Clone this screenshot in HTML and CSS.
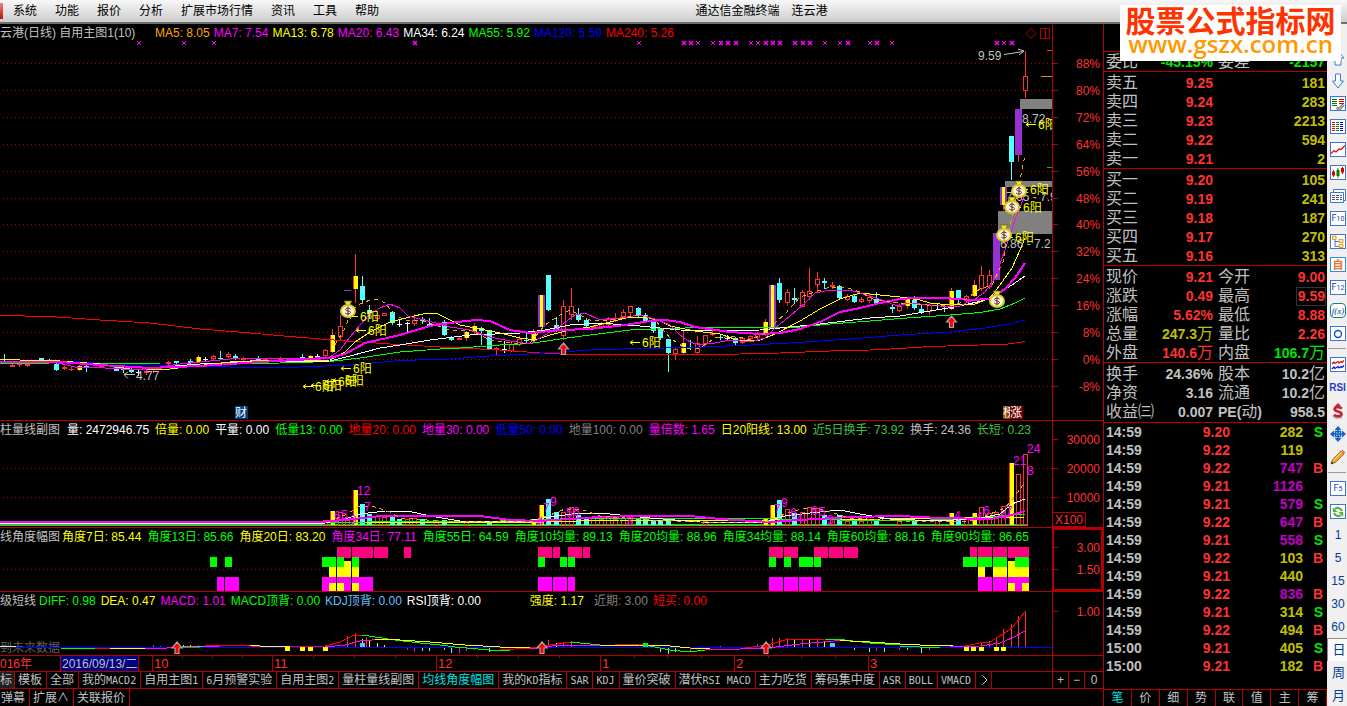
FILE: index.html
```html
<!DOCTYPE html>
<html lang="zh-CN">
<head>
<meta charset="utf-8">
<title>通达信金融终端 连云港</title>
<link rel="stylesheet" href="styles.css">
</head>
<body>
<header class="menubar">
  <span class="app-mark"></span>
  <nav class="menu">
    <button>系统</button><button>功能</button><button>报价</button><button>分析</button><button>扩展市场行情</button><button>资讯</button><button>工具</button><button>帮助</button>
  </nav>
  <h1 class="title">通达信金融终端&emsp;连云港</h1>
</header>

<div class="workspace">
  <main class="charts">
    <section class="pane pane-main">
      <svg id="main" viewBox="0 24 1103 396" preserveAspectRatio="xMaxYMax slice"></svg>
      <div class="legend">
        <span class="name wide">云港(日线) 自用主图1(10)</span>
        <span class="c-orange">MA5: 8.05</span><span class="c-magenta">MA7: 7.54</span><span class="c-yellow">MA13: 6.78</span><span class="c-magenta">MA20: 6.43</span><span class="c-white">MA34: 6.24</span><span class="c-lime">MA55: 5.92</span><span class="c-blue">MA120: 5.59</span><span class="c-red">MA240: 5.26</span>
      </div>
    </section>
    <section class="pane pane-volume">
      <svg id="volume" viewBox="0 421 1103 106" preserveAspectRatio="xMaxYMax slice"></svg>
      <div class="legend loose">
        <span class="name">柱量线副图</span>
        <span class="c-white">量: 2472946.75</span><span class="c-yellow">倍量: 0.00</span><span class="c-white">平量: 0.00</span><span class="c-lime">低量13: 0.00</span><span class="c-red">地量20: 0.00</span><span class="c-magenta">地量30: 0.00</span><span class="c-blue">低量50: 0.00</span><span class="c-gray">地量100: 0.00</span><span class="c-magenta">量倍数: 1.65</span><span class="c-yellow">日20阳线: 13.00</span><span class="c-green">近5日换手: 73.92</span><span class="c-silver">换手: 24.36</span><span class="c-green">长短: 0.23</span>
      </div>
    </section>
    <section class="pane pane-angle">
      <svg id="angle" viewBox="0 528 1103 63" preserveAspectRatio="xMaxYMax slice"></svg>
      <div class="legend loose">
        <span class="name narrow">线角度幅图</span>
        <span class="c-yellow">角度7日: 85.44</span><span class="c-lime">角度13日: 85.66</span><span class="c-yellow">角度20日: 83.20</span><span class="c-magenta">角度34日: 77.11</span><span class="c-lime">角度55日: 64.59</span><span class="c-lime">角度10均量: 89.13</span><span class="c-lime">角度20均量: 88.96</span><span class="c-lime">角度34均量: 88.14</span><span class="c-lime">角度60均量: 88.16</span><span class="c-lime">角度90均量: 86.65</span>
      </div>
    </section>
    <section class="pane pane-macd">
      <svg id="macd" viewBox="0 592 1103 63" preserveAspectRatio="xMaxYMax slice"></svg>
      <div class="legend medium">
        <span class="name short">级短线</span>
        <span class="c-lime">DIFF: 0.98</span><span class="c-yellow">DEA: 0.47</span><span class="c-magenta">MACD: 1.01</span><span class="c-lime">MACD顶背: 0.00</span><span class="c-sky">KDJ顶背: 0.00</span><span class="c-white">RSI顶背: 0.00</span>
        <span class="c-yellow apart">强度: 1.17</span><span class="c-gray near">近期: 3.00</span><span class="c-red">短买: 0.00</span>
      </div>
    </section>
    <section class="pane pane-time">
      <svg id="time" viewBox="0 656 1103 15" preserveAspectRatio="xMaxYMax slice"></svg>
    </section>
    <nav class="tabs">
      <button class="chosen">标</button><button>模板</button><button>全部</button><button>我的<i>MACD2</i></button><button>自用主图<i>1</i></button><button><i>6</i>月预警实验</button><button>自用主图<i>2</i></button><button>量柱量线副图</button><button class="active">均线角度幅图</button><button>我的<i>KD</i>指标</button><button><i>SAR</i></button><button><i>KDJ</i></button><button>量价突破</button><button>潜伏<i>RSI MACD</i></button><button>主力吃货</button><button>筹码集中度</button><button><i>ASR</i></button><button><i>BOLL</i></button><button><i>VMACD</i></button><button class="more" aria-label="更多"><svg width="6" height="10" viewBox="0 0 6 10"><path d="M.5.5 5 5 .5 9.500" fill="none" stroke="#c0c0c0"/></svg></button>
      <span class="zoomers"><button>+</button><button>−</button><button>0</button></span>
    </nav>
    <nav class="tabs lower">
      <button class="first">弹幕</button><button>扩展∧</button><button>关联报价</button>
    </nav>
  </main>

  <aside class="quote">
    <div class="quote-title"></div>
    <table class="book">
      <colgroup><col class="k1"><col class="v1"><col class="k2"><col></colgroup>
      <tbody class="single"><tr><th>委比</th><td class="dn">-45.15%</td><th>委差</th><td class="dn">-2157</td></tr></tbody>
      <tbody>
        <tr><th>卖五</th><td class="up">9.25</td><td colspan="2" class="qty">181</td></tr>
        <tr><th>卖四</th><td class="up">9.24</td><td colspan="2" class="qty">283</td></tr>
        <tr><th>卖三</th><td class="up">9.23</td><td colspan="2" class="qty">2213</td></tr>
        <tr><th>卖二</th><td class="up">9.22</td><td colspan="2" class="qty">594</td></tr>
        <tr><th>卖一</th><td class="up">9.21</td><td colspan="2" class="qty">2</td></tr>
      </tbody>
      <tbody>
        <tr><th>买一</th><td class="up">9.20</td><td colspan="2" class="qty">105</td></tr>
        <tr><th>买二</th><td class="up">9.19</td><td colspan="2" class="qty">241</td></tr>
        <tr><th>买三</th><td class="up">9.18</td><td colspan="2" class="qty">187</td></tr>
        <tr><th>买四</th><td class="up">9.17</td><td colspan="2" class="qty">270</td></tr>
        <tr><th>买五</th><td class="up">9.16</td><td colspan="2" class="qty">313</td></tr>
      </tbody>
      <tbody>
        <tr><th>现价</th><td class="up">9.21</td><th>今开</th><td class="up">9.00</td></tr>
        <tr><th>涨跌</th><td class="up">0.49</td><th>最高</th><td class="up"><span class="boxed">9.59</span></td></tr>
        <tr><th>涨幅</th><td class="up">5.62%</td><th>最低</th><td class="up">8.88</td></tr>
        <tr><th>总量</th><td class="qty">247.3<b>万</b></td><th>量比</th><td class="up">2.26</td></tr>
        <tr><th>外盘</th><td class="up">140.6<b>万</b></td><th>内盘</th><td class="dn">106.7<b>万</b></td></tr>
      </tbody>
      <tbody>
        <tr><th>换手</th><td>24.36%</td><th>股本</th><td>10.2<b>亿</b></td></tr>
        <tr><th>净资</th><td>3.16</td><th>流通</th><td>10.2<b>亿</b></td></tr>
        <tr><th>收益㈢</th><td>0.007</td><th><em>PE(</em>动<em>)</em></th><td>958.5</td></tr>
      </tbody>
    </table>
    <table class="ticks">
      <colgroup><col class="t"><col class="p"><col class="q"><col></colgroup>
      <tbody>
        <tr><td>14:59</td><td>9.20</td><td>282</td><td class="dn">S</td></tr>
        <tr><td>14:59</td><td>9.22</td><td>119</td><td></td></tr>
        <tr><td>14:59</td><td>9.22</td><td class="big">747</td><td class="up">B</td></tr>
        <tr><td>14:59</td><td>9.21</td><td class="big">1126</td><td></td></tr>
        <tr><td>14:59</td><td>9.21</td><td class="big">579</td><td class="dn">S</td></tr>
        <tr><td>14:59</td><td>9.22</td><td class="big">647</td><td class="up">B</td></tr>
        <tr><td>14:59</td><td>9.21</td><td class="big">558</td><td class="dn">S</td></tr>
        <tr><td>14:59</td><td>9.22</td><td>103</td><td class="up">B</td></tr>
        <tr><td>14:59</td><td>9.21</td><td>440</td><td></td></tr>
        <tr><td>14:59</td><td>9.22</td><td class="big">836</td><td class="up">B</td></tr>
        <tr><td>14:59</td><td>9.21</td><td>314</td><td class="dn">S</td></tr>
        <tr><td>14:59</td><td>9.22</td><td>494</td><td class="up">B</td></tr>
        <tr><td>15:00</td><td>9.21</td><td>405</td><td class="dn">S</td></tr>
        <tr><td>15:00</td><td>9.21</td><td>182</td><td class="up">B</td></tr>
      </tbody>
    </table>
    <nav class="quote-tabs">
      <button class="active">笔</button><button>价</button><button>细</button><button>势</button><button>联</button><button>值</button><button>主</button><button>筹</button>
    </nav>
  </aside>

  <nav class="tools">
    <button aria-label="上一只"><svg viewBox="0 0 16 16"><path d="M8 1 14 8H11V15H5V8H2Z" fill="#fff" stroke="#3c78dc"/></svg></button>
    <button aria-label="下一只"><svg viewBox="0 0 16 16"><path d="M5.500 1H10.500V8H13.500L8 15 2.500 8H5.500Z" fill="#fff" stroke="#3c78dc"/></svg></button>
    <button class="framed" aria-label="报表"><svg viewBox="0 0 14 14"><path d="M1 2.500h5M1 4.500h5M1 6.500h5M1 8.500h5" stroke="#008000"/><path d="M8 2.500h5M8 4.500h5M8 6.500h5" stroke="#e00000"/><path d="m6 10.500 2 2 4.500-5" stroke="#777" stroke-width="3" fill="none"/><path d="m6 10.500 2 2 4.500-5" stroke="#ddd" fill="none"/></svg></button>
    <button class="framed" aria-label="行情表"><svg viewBox="0 0 14 14"><path d="M1 2.500h3M1 4.500h3M1 6.500h3M1 8.500h3M1 10.500h3" stroke="#e00000"/><path d="M5 2.500h3M5 4.500h3M5 6.500h3M5 8.500h3M5 10.500h3" stroke="#008000"/><path d="M9 2.500h3M9 4.500h3M9 6.500h3M9 8.500h3M9 10.500h3" stroke="#0000e0"/></svg></button>
    <button class="framed" aria-label="分时图"><svg viewBox="0 0 14 14"><path d="m0 10.500 3-3 2 1.500 3-3 2 .5 4-4" stroke="#e00000" fill="none" stroke-width="1.200"/></svg></button>
    <button class="framed" aria-label="K线图"><svg viewBox="0 0 14 14"><path d="M2.500 4v7M11.500 1v7" stroke="#e00000"/><path d="M1 5.500h3v4H1zM10 2h3v4.500h-3z" fill="#e00000"/><path d="M7 2v10" stroke="#008000"/><path d="M5.500 4h3v6h-3z" fill="#008000"/></svg></button>
    <button aria-label="多窗口"><svg viewBox="0 0 16 16"><path d="M3.500 1.500h12v11h-12z" fill="#fff" stroke="#3c78dc"/><path d="M.5 4.500h13v10H.5z" fill="#fff" stroke="#3c78dc"/><path d="M2 7.500h10M2 9.500h10M2 11.500h10" stroke="#555" stroke-dasharray="3 1"/></svg></button>
    <button class="framed word">F<small>10</small></button>
    <button class="framed" aria-label="板块树"><svg viewBox="0 0 14 14"><path d="M4 3.500v8h4M4 6.500h4" stroke="#3c78dc" fill="none"/><path d="M1.500 1h3.500v3.500h-3.500zM8 4.500h4v3H8zM8 9.500h4v3H8z" fill="#ffe9a8" stroke="#e0a020"/></svg></button>
    <button class="framed self">自</button>
    <button class="framed word">F<small>12</small></button>
    <button class="framed fx">f(x)</button>
    <button class="framed" aria-label="圆"><svg viewBox="0 0 14 14"><circle cx="7" cy="7" r="3.500" fill="none" stroke="#1050c0" stroke-width="1.400"/></svg></button>
    <hr>
    <button class="framed" aria-label="叠加"><svg viewBox="0 0 14 14"><path d="m1 6 2-2 1 1.500 3-2 1 1.500 2-1.500 1 1 2-2" stroke="#e00000" fill="none" stroke-width="1.200"/><path d="m1 11 2-2 1 1.500 3-2 1 1.500 2-1.500 1 1 2-2" stroke="#0000e0" fill="none" stroke-width="1.200"/></svg></button>
    <button class="rsi">RSI</button>
    <button aria-label="指标"><svg viewBox="0 0 16 16"><path d="M13 15 6 16 2 13 5 11Z" fill="#aaa"/><path d="M12 5.500C9 3.500 4.500 3.800 4.500 6.300S11.500 8.200 11.500 11 6.500 13.700 4 12" fill="none" stroke="#c8202c" stroke-width="2.600"/><path d="M8 0 11.500 3.500H4.500Z" fill="#c8202c"/></svg></button>
    <button aria-label="移动"><svg viewBox="0 0 16 16"><path d="M8 0 11.500 4H4.500ZM16 8 12 11.500V4.500ZM8 16 4.500 12H11.500ZM0 8 4 4.500V11.500Z" fill="#1464c8"/><path d="M5.500 5.500h5v5h-5zM8 3v10M3 8h10" fill="none" stroke="#1464c8" stroke-width="1.500"/></svg></button>
    <button aria-label="画线"><svg viewBox="0 0 16 16"><path d="M1 15 2.500 10.500 11 2 14 5 5.500 13.500Z" fill="#f0a030" stroke="#a06010" stroke-width=".8"/><path d="m3.500 11.500 8-8" stroke="#ffe090"/><path d="m11 2 1.500-1.500L15.500 3.500 14 5Z" fill="#d08070"/><path d="m1 15 .8-2.500 1.700 1.700Z" fill="#222"/></svg></button>
    <hr class="tall">
    <button class="framed word">F<small>5</small></button>
    <button class="framed" aria-label="刷新"><svg viewBox="0 0 16 16"><path d="M12.500 7A5 5 0 0 0 4.500 4.500" fill="none" stroke="#58b040" stroke-width="2.400"/><path d="M3.500 9A5 5 0 0 0 11.500 11.500" fill="none" stroke="#58b040" stroke-width="2.400"/><path d="M2 2.500V8H7.500ZM14 13.500V8H8.500Z" fill="#58b040"/></svg></button>
    <button>1</button><button>5</button><button>15</button><button>30</button><button>60</button>
    <button class="cjk pressed">日</button><button class="cjk">周</button><button class="cjk">月</button>
  </nav>
</div>

<div class="sitemark"><strong>股票公式指标网</strong><a href="#">www.gszx.com.cn</a></div>
<script src="charts.js"></script>
</body>
</html>
```

FILE: styles.css
```css
* { box-sizing: border-box; }
:root {
  --rule: #b40000;
  --sans: "Liberation Sans", "Noto Sans CJK SC", sans-serif;
}
body {
  margin: 0;
  height: 100vh;
  display: flex;
  flex-direction: column;
  overflow: hidden;
  background: #000;
  color: #c0c0c0;
  font: 12px/16px var(--sans);
}
button {
  margin: 0;
  padding: 0;
  border: 0;
  background: none;
  color: inherit;
  font: inherit;
  white-space: nowrap;
}

/* menu bar */
.menubar {
  flex: none;
  height: 24px;
  display: flex;
  align-items: center;
  background: linear-gradient(#f8f8f8, #cfcfcf 21px);
  border-bottom: 2px solid #6e6e6e;
  color: #000;
}
.app-mark { width: 3px; height: 16px; background: linear-gradient(#f08080, #c01010); }
.menu { display: flex; gap: 2px; padding-left: 2px; }
.menu button { padding: 0 8px; }
.title { flex: 1; margin: 0; padding-right: 211px; text-align: center; font: inherit; }

/* layout */
.workspace { flex: 1; min-height: 0; display: flex; }
.charts { flex: 1; min-width: 0; display: flex; flex-direction: column; }
.pane {
  flex: none;
  display: grid;
  border-bottom: 1px solid var(--rule);
  overflow: hidden;
}
.pane > * { grid-area: 1 / 1; }
.pane > svg { display: block; width: 100%; height: 100%; min-height: 0; }
.pane-main { flex: 1; min-height: 0; }
.pane-volume { height: 107px; }
.pane-angle, .pane-macd { height: 64px; }
.pane-time { height: 16px; }

.legend {
  display: flex;
  align-self: start;
  gap: 4px;
  height: 18px;
  line-height: 18px;
  white-space: nowrap;
}
.legend.medium { gap: 5px; }
.legend.loose { gap: 6px; }
.name { width: 61px; color: #c0c0c0; }
.name.wide { width: 151px; }
.name.narrow { width: 56px; }
.name.short { width: 34px; }
.apart { margin-left: 44px; }
.near { margin-left: 5px; }
.c-orange { color: #ffa500; }
.c-magenta { color: #f0f; }
.c-yellow { color: #ff0; }
.c-white { color: #fff; }
.c-lime { color: #0f0; }
.c-blue { color: #00f; }
.c-red { color: #f00; }
.c-gray { color: #808080; }
.c-silver { color: #c0c0c0; }
.c-green { color: #40c040; }
.c-sky { color: #60c0ff; }

.pane polyline { shape-rendering: crispEdges; }
svg text { font: 12px var(--sans); }
svg .small { font-size: 12px; }
svg .date { font-size: 13px; }

/* indicator tabs */
.tabs {
  flex: none;
  display: flex;
  height: 17px;
  border-bottom: 1px solid var(--rule);
  line-height: 16px;
}
.tabs button { padding: 0 4px 0 3px; border-right: 1px solid var(--rule); }
.tabs i { font: 10px "DejaVu Sans Mono", monospace; }
.tabs .chosen { padding: 0 2px 0 0; background: #202020; }
.tabs .active { color: #00e0e0; }
.tabs .more { width: 16px; padding: 0 0 0 6px; }
.tabs .more svg { display: block; }
.zoomers { display: flex; margin-left: auto; border-left: 1px solid var(--rule); }
.zoomers button { width: 16px; padding: 0; }
.zoomers button:last-child { width: 18px; border-right: 0; }
.tabs.lower { border-bottom: 0; }
.tabs .first { padding-left: 1px; }

/* quote panel */
.quote {
  flex: none;
  width: 224px;
  display: flex;
  flex-direction: column;
  border-left: 1px solid var(--rule);
  font-size: 14px;
}
.quote-title { height: 27px; }
.quote table { width: 100%; table-layout: fixed; border-collapse: separate; border-spacing: 0; }
.quote td { padding: 0; text-align: right; font-weight: bold; }
.book tbody tr:first-child > * { border-top: 1px solid var(--rule); height: 21px; padding-top: 1px; }
.book .single tr:first-child > * { height: 20px; padding-top: 0; }
.book tr > * { height: 19px; line-height: 18px; }
.book th { padding: 0 0 0 2px; font-size: 16px; font-weight: normal; text-align: left; white-space: nowrap; }
.book td { padding-right: 1px; }
.book td:last-child { padding-right: 2px; }
.book th + td + th { padding-left: 4px; }
.book b { font-size: 16px; font-weight: normal; line-height: 0; }
.book em { font-size: 14px; font-style: normal; font-weight: bold; line-height: 0; }
.k1 { width: 50px; }
.v1 { width: 60px; }
.k2 { width: 56px; }
.boxed { display: inline-block; height: 17px; line-height: 16px; padding-left: 1px; outline: 1px solid #333; }
.up { color: #ff3232; }
.dn { color: #00e600; }
.qty { color: #c0c000; }
.ticks { border-top: 1px solid var(--rule); margin-top: 1px; }
.ticks td { height: 18px; line-height: 18px; }
.ticks td:nth-child(1) { text-align: left; padding-left: 2px; }
.ticks td:nth-child(2) { color: #ff3232; }
.ticks td:nth-child(3) { color: #c0c000; }
.ticks td.big { color: #c000c0; }
.ticks td:last-child { padding-right: 4px; }
.t { width: 60px; }
.p { width: 66px; }
.q { width: 73px; }
.quote-tabs { display: flex; margin-top: auto; height: 17px; border-top: 1px solid var(--rule); }
.quote-tabs button { flex: 1; border-right: 1px solid var(--rule); font-size: 12px; line-height: 16px; }
.quote-tabs .active { color: #00e0e0; }

/* tool strip */
.tools {
  flex: none;
  width: 20px;
  display: flex;
  flex-direction: column;
  padding-top: 22px;
  background: #f0f0f0;
  color: #003c96;
}
.tools button {
  flex: none;
  display: grid;
  place-items: center;
  width: 20px;
  height: 23px;
  padding-left: 2px;
}
.tools svg { display: block; width: 16px; height: 16px; }
.tools .framed {
  width: 16px;
  height: 15px;
  margin: 4px 1px 4px 3px;
  padding: 0;
  background: #fff;
  outline: 1px solid #3c78dc;
  outline-offset: -1px;
  overflow: hidden;
}
.tools .framed svg { width: 14px; height: 14px; }
.tools .word { display: block; font: 9px/15px Roboto, sans-serif; color: #1040c0; }
.tools .word small { font-size: 7px; }
.tools .self { color: #f07030; font-size: 11px; line-height: 12px; font-weight: bold; outline-color: #1e96f0; }
.tools .fx { display: block; border-radius: 4px; font: italic 9px/14px "Liberation Serif", serif; outline-color: #108080; }
.tools .rsi { font: bold 10px "Liberation Sans", sans-serif; padding-left: 1px; color: #1e3cd2; }
.tools .cjk { font-size: 13px; padding-left: 3px; }
.tools .pressed { background: #fafafa; border-top: 1px solid #909090; border-left: 1px solid #909090; }
.tools hr { width: 18px; margin: 3px 0 4px 1px; border: 0; border-top: 1px solid #999; flex: none; }
.tools .tall { margin-top: 4px; }

/* site banner over the corner */
.sitemark {
  position: absolute;
  top: 5px;
  right: 6px;
  width: 221px;
  height: 56px;
  display: flex;
  flex-direction: column;
  align-items: center;
  background: #fff;
}
.sitemark strong { color: #f30; font: bold 30px/28px "Noto Sans CJK SC", sans-serif; }
.sitemark a { color: #f90; font: 600 24px/22px "Open Sans", sans-serif; text-decoration: none; }
```

FILE: charts.js
```js
const RED = '#ff3232', CYAN = '#54ffff', YELLOW = '#ff0', PURPLE = '#9632d2', RULE = '#b40000';
const MAGENTA = '#f0f', LIME = '#0f0', BLUE = '#00f';

const rect = (x, y, w, h, fill) => `<rect x="${x}" y="${y}" width="${w}" height="${h}" fill="${fill}"/>`;
const hline = (x1, x2, y, color) => rect(x1, y, x2 - x1, 1, color);
const vline = (x, y1, y2, color) => rect(x, y1, 1, y2 - y1, color);
const text = (x, y, s, color, cls = '', anchor = 'start') =>
  `<text x="${x}" y="${y}" fill="${color}" class="${cls}" text-anchor="${anchor}">${s}</text>`;
const curve = (pts, color, width = 1, dash = '') =>
  `<polyline points="${pts}" fill="none" stroke="${color}" stroke-width="${width}" stroke-dasharray="${dash}" stroke-linejoin="round"/>`;
const grid = y => `<path d="M3 ${y}.500H1052" stroke="#b40000" stroke-dasharray="1 3"/>`;
const put = (id, parts) => { document.getElementById(id).innerHTML = parts.join(''); };

function axis(top, bottom, marks) {
  return rect(1052, top, 51, bottom - top, '#000') + vline(1052, top, bottom, RULE) +
    marks.map(([y, s]) => hline(1053, 1058, y, RULE) + text(1100, y + 5, s, RED, '', 'end')).join('');
}

function moneyBag(x, y) {
  return `<g transform="translate(${x} ${y})">
    <path d="M-4-10h8l-2.500 4h-3z" fill="#f0e040" stroke="#706000" stroke-width=".8"/>
    <ellipse rx="7" ry="6" fill="#fff8e0" stroke="#d8cc20" stroke-width="2"/>
    <path d="M2.500-2C1-3.500-2.500-3-2.500-1.300S2.500-.4 2.500 1.500-1.500 3.500-2.800 2M0-4.500V4.500" fill="none" stroke="#602020"/>
  </g>`;
}
function buyArrow(x, y) {
  return `<path d="M${x} ${y - 6}l5 6h-3v5.500h-4v-5.500h-3z" fill="#f00" stroke="#b0a0a0" stroke-width="1.200"/>`;
}
function yangLabel(x, y) {
  return `<path d="M${x} ${y - 4.5}h10M${x + 3} ${y - 6.5}l-3 2 3 2" fill="none" stroke="${YELLOW}"/>` + text(x + 12, y, '6阳', YELLOW);
}

/* x, high, low, body top, body bottom, kind */
const candles = [
  [4, 354, 364, 359, 360, 'c'], [12, 362, 367, 365, 367, 'r'], [19, 362, 367, 364, 365, 'r'], [27, 363, 367, 364, 366, 'r'],
  [41, 358, 361, 358, 360, 'c'], [49, 359, 363, 360, 361, 'w'], [56, 362, 371, 364, 370, 'c'], [64, 366, 370, 367, 369, 'h'],
  [71, 367, 371, 369, 370, 'r'], [79, 365, 371, 366, 370, 'y'], [86, 365, 372, 366, 368, 'c'], [101, 364, 368, 366, 368, 'r'],
  [116, 365, 371, 366, 371, 'c'], [123, 368, 373, 369, 370, 'c'], [131, 368, 373, 370, 372, 'c'], [138, 369, 376, 372, 373, 'w'],
  [146, 370, 375, 371, 373, 'h'], [153, 367, 373, 368, 369, 'y'], [168, 361, 365, 362, 364, 'h'], [176, 361, 366, 361, 363, 'c'],
  [190, 359, 364, 361, 363, 'c'], [198, 355, 363, 357, 362, 'y'], [205, 357, 361, 359, 360, 'w'], [213, 355, 360, 356, 359, 'h'],
  [220, 351, 360, 358, 359, 'c'], [228, 352, 358, 354, 357, 'h'], [235, 354, 360, 356, 358, 'c'], [243, 357, 362, 359, 360, 'r'],
  [258, 356, 363, 358, 361, 'c'], [265, 358, 362, 359, 360, 'r'], [280, 357, 361, 359, 360, 'r'], [302, 354, 360, 357, 358, 'c'],
  [310, 355, 360, 356, 359, 'y'], [317, 354, 359, 356, 357, 'w'], [325, 349, 357, 350, 356, 'h'], [332, 329, 353, 335, 352, 'y'],
  [340, 315, 341, 326, 337, 'h'], [355, 254, 303, 276, 289, 'y'], [362, 276, 304, 286, 300, 'c'], [369, 305, 318, 310, 314, 'c'],
  [377, 314, 320, 315, 319, 'h'], [384, 313, 316, 313, 316, 'h'], [392, 311, 325, 312, 323, 'c'], [399, 320, 327, 324, 325, 'w'],
  [407, 322, 332, 323, 324, 'w'], [414, 314, 326, 320, 324, 'h'], [422, 317, 324, 319, 321, 'c'], [429, 318, 326, 324, 326, 'c'],
  [444, 320, 336, 322, 335, 'c'], [451, 336, 341, 338, 340, 'c'], [459, 337, 340, 338, 340, 'r'], [466, 331, 341, 332, 338, 'y'],
  [474, 323, 334, 326, 332, 'y'], [481, 327, 345, 328, 331, 'c'], [489, 330, 350, 330, 349, 'c'], [496, 347, 355, 348, 350, 'r'],
  [504, 341, 353, 349, 350, 'w'], [511, 341, 352, 344, 351, 'h'], [519, 336, 346, 339, 345, 'h'], [526, 333, 343, 340, 341, 'c'],
  [533, 329, 343, 333, 341, 'y'], [541, 295, 327, 295, 327, 'q'], [548, 275, 311, 275, 310, 'c'], [556, 317, 332, 325, 330, 'c'],
  [563, 300, 340, 306, 336, 'h'], [571, 288, 320, 306, 315, 'h'], [578, 308, 322, 314, 320, 'c'], [586, 318, 329, 320, 326, 'c'],
  [593, 325, 329, 326, 328, 'r'], [601, 322, 328, 324, 327, 'h'], [608, 317, 326, 318, 325, 'h'], [615, 313, 322, 320, 321, 'r'],
  [623, 309, 318, 312, 317, 'h'], [630, 306, 316, 306, 313, 'h'], [638, 307, 318, 308, 316, 'c'], [645, 313, 322, 315, 321, 'c'],
  [653, 320, 333, 322, 331, 'c'], [660, 328, 340, 329, 338, 'c'], [668, 339, 372, 339, 353, 'c'], [675, 347, 360, 349, 354, 'h'],
  [683, 330, 354, 343, 353, 'y'], [690, 340, 350, 347, 348, 'c'], [697, 336, 355, 343, 353, 'h'], [705, 335, 345, 335, 344, 'h'],
  [712, 327, 336, 333, 335, 'r'], [720, 334, 340, 337, 338, 'c'], [727, 335, 341, 338, 339, 'w'], [735, 337, 345, 338, 343, 'c'],
  [742, 337, 344, 338, 343, 'h'], [750, 335, 340, 336, 339, 'h'], [757, 332, 339, 333, 338, 'h'], [765, 319, 336, 322, 333, 'y'],
  [772, 285, 327, 285, 327, 'q'], [779, 278, 303, 283, 300, 'c'], [787, 289, 305, 292, 303, 'h'], [794, 288, 304, 298, 300, 'c'],
  [802, 290, 307, 292, 307, 'h'], [809, 268, 300, 291, 297, 'h'], [817, 272, 292, 279, 285, 'h'], [824, 278, 289, 281, 283, 'c'],
  [832, 282, 289, 285, 287, 'r'], [839, 285, 299, 286, 298, 'c'], [847, 294, 301, 296, 300, 'h'], [854, 294, 303, 296, 302, 'c'],
  [861, 297, 303, 299, 302, 'h'], [869, 293, 303, 297, 301, 'h'], [876, 292, 305, 299, 303, 'c'], [892, 304, 313, 307, 309, 'c'],
  [899, 304, 312, 306, 311, 'h'], [907, 297, 309, 299, 306, 'y'], [914, 296, 310, 300, 308, 'c'], [921, 305, 314, 309, 312, 'c'],
  [929, 304, 315, 305, 312, 'h'], [937, 303, 309, 305, 306, 'w'], [944, 304, 312, 308, 309, 'c'], [951, 288, 310, 291, 309, 'y'],
  [958, 290, 305, 290, 300, 'c'], [966, 295, 302, 296, 300, 'h'], [974, 280, 297, 285, 296, 'y'], [981, 266, 291, 275, 289, 'h'],
  [989, 270, 289, 275, 287, 'h'], [996, 233, 280, 233, 280, 'p'], [1003, 187, 210, 187, 205, 'q'], [1011, 136, 180, 136, 162, 'c'],
  [1018, 109, 162, 109, 155, 'p'], [1025, 51, 98, 76, 91, 'h']
];

function candle([x, hi, lo, top, bottom, kind]) {
  const h = Math.max(bottom - top, 1);
  const body = {
    c: () => vline(x, hi, lo, CYAN) + rect(x - 2, top, 5, h, CYAN),
    r: () => vline(x, hi, lo, RED) + rect(x - 2, top, 5, h, RED),
    w: () => vline(x, hi, lo, '#fff') + rect(x - 2, top, 5, h, '#fff'),
    h: () => vline(x, hi, top, RED) + vline(x, bottom, lo, RED) +
      `<rect x="${x - 1.5}" y="${top + 0.5}" width="4" height="${Math.max(h - 1, 1)}" fill="none" stroke="${RED}"/>`,
    y: () => vline(x, hi, lo, RED) + rect(x - 2, top, 5, h, RED) + rect(x - 1, top, 4, h, YELLOW),
    p: () => vline(x, hi, lo, RED) + rect(x - 3, top, 7, h, PURPLE),
    q: () => vline(x, hi, lo, RED) + rect(x - 3, top, 7, h, PURPLE) + rect(x - 1, top, 3, h, YELLOW)
  };
  return body[kind]();
}

const averages = [
  ['0,315.500 50,316.500 100,320 150,323 200,329 250,333 290,336.500 340,340.500 390,344 440,347 500,350 540,353 570,354.500 720,354.500 780,353 830,351 870,350 900,348.500 930,346.500 980,345 1005,344.500 1025,341.500', '#f00'],
  ['0,361 60,361 120,364 150,365 230,367 300,367 350,365 400,360.500 450,359 490,356 530,354 560,352 590,350 640,348.500 690,347.500 750,345 790,343 850,339 900,335 950,332 985,328 1010,324 1025,320', BLUE],
  ['0,364 50,363 100,363 160,364 220,364 280,363 330,361.500 360,358 400,352 440,349 460,348 500,345 530,343.500 560,339 590,335 630,330 670,328.500 700,327.500 750,327.500 790,328 830,324 870,321 900,318.500 950,315 980,312.500 1000,309 1015,303 1025,298', LIME],
  ['0,361 60,362 100,365 150,368 200,364 250,362 330,361 350,356 380,348 400,345 430,340 470,335 520,333 545,330 570,325 600,323 640,326 680,330 720,331 760,330 790,327 820,324 870,318 900,316 930,311 960,306 985,300 1000,292 1012,285 1025,276', '#fff'],
  ['0,359.500 60,361 100,364 130,369 170,369 230,362 250,361 330,360 345,352 355,342 370,332 390,322 410,317 425,313.500 438,314 450,320 460,325 500,333 520,338 535,340 550,335 570,330 590,327 610,322 630,317 645,317 660,321 670,326 695,331 720,334 740,341 760,340 775,334 800,321 820,309 840,299 860,293 880,295 900,297 920,300 930,303 950,305 975,304 990,298 1000,285 1012,268 1020,250 1025,238', YELLOW],
  ['0,361 50,361 75,367 105,368 140,370 180,364 240,358 300,359 330,357 340,350 350,337 360,325 370,314 380,308 390,304 400,308 408,316 420,319 440,324 450,327 470,330 490,337 510,341 530,344 545,335 560,326 575,315 585,313 600,320 620,318 640,315 655,319 670,325 680,335 690,342 700,345 715,343 730,340 750,342 765,338 775,328 790,316 805,303 815,293 830,290 850,290 870,296 885,301 897,306 910,303 940,306 960,306 975,299 985,292 995,278 1005,250 1015,220 1024,197', MAGENTA],
  ['0,362 60,362 100,365 150,368 200,366 260,362 330,358 345,354 365,343 400,335 430,326 450,323 475,320 490,321 510,330 530,333 560,330 590,329 625,325 650,321 665,320 680,322 695,327 730,332 760,334 780,333 800,329 820,322 840,312 860,308 880,303 900,299 915,298 945,298 970,300 990,299 1005,289 1015,278 1025,263', MAGENTA, 2],
  ['335,345 345,328 352,310 360,304 370,300 376,299 385,303 395,315 405,320 420,320 450,330 470,330 490,340 510,343 530,343 545,325 560,315 570,310 590,320 610,320 640,315 655,320 670,338 685,348 700,348 715,338 735,336 750,340 765,333 775,323 785,314 800,297 830,287 845,287 860,292 875,300 900,303 940,306 960,303 980,289 992,285 1003,262 1010,225 1018,190 1025,155', '#ffa500', 1, '4 4']
];

/* signal crosses along the top: 1 marks the heavier ones */
const crosses = [[139], [184], [214], [415, 1], [639], [684, 1], [691, 1], [698], [713], [721, 1], [728, 1], [736, 1], [751], [758],
  [766, 1], [773, 1], [780, 1], [795, 1], [803, 1], [810, 1], [825], [840], [848, 1], [870], [877, 1], [892], [997, 1], [1004], [1012, 1]];

put('main', [
  ...[63, 90, 117, 144, 171, 198, 224, 251, 278, 305, 332, 359, 386].map(grid),
  ...crosses.map(([x, heavy]) => `<path d="M${x - 2} 41l4 4m0-4l-4 4" stroke="${MAGENTA}" stroke-width="${heavy ? 1.6 : 1}"/>`),
  rect(1020, 99, 32, 10, '#808080'), rect(1005, 181, 47, 6, '#808080'), rect(998, 211, 54, 23, '#808080'),
  ...candles.map(candle),
  hline(344, 351, 290, PURPLE),
  ...averages.map(a => curve(...a)),
  text(978, 60, '9.59', '#c0c0c0'), '<path d="M1004 54.500 1024 51.500M1018 49l6 2-5 4" fill="none" stroke="#c0c0c0"/>',
  text(1022, 123, '8.72 -', '#c0c0c0'), text(1006, 201, '7.65 - 7.9', '#c0c0c0'), text(1000, 248, '6.86 - 7.2', '#c0c0c0'),
  text(136, 380, '4.77', '#c0c0c0'), '<path d="M124 374.500h11M128 372l-4 2.500 4 4" fill="none" stroke="#c0c0c0"/>',
  ...[[348, 321], [356, 335], [341, 373], [303, 391], [311, 390], [326, 386], [333, 385], [630, 347], [1026, 129], [1018, 194], [1011, 212], [1003, 242]].map(p => yangLabel(...p)),
  ...[[348, 311], [1019, 191], [1012, 207], [1004, 235], [997, 301]].map(p => moneyBag(...p)),
  buyArrow(563.5, 349), buyArrow(951.5, 322),
  rect(235, 406, 13, 13, '#003c78'), text(235, 417, '财', '#fff'),
  rect(1003, 406, 7, 13, '#8c4600'), text(1003, 417, '榜', '#fff'), rect(1010, 406, 13, 13, '#780000'), text(1010, 417, '涨', '#fff'),
  hline(1047, 1052, 50, RED), hline(1041, 1052, 76, '#c0a000'), hline(1047, 1052, 167, '#00c000'),
  `<path d="M1031 28.500l5 5-5 5-5-5zM1040.500 28.500h9v10h-9zM1045.500 28.500v10" fill="none" stroke="${RULE}"/>`,
  axis(24, 420, [[63, '88%'], [90, '80%'], [117, '72%'], [144, '64%'], [171, '56%'], [198, '48%'], [224, '40%'], [251, '32%'], [278, '24%'], [305, '16%'], [332, '8%'], [359, '0%'], [386, '-8%']])
]);

/* volume: x, top, kind */
const volumes = [[325, 520, 'h'], [332, 511, 'y'], [340, 512, 'h'], [347, 517, 'h'], [355, 490, 'y'], [362, 504, 'c'], [369, 514, 'c'],
  [377, 516, 'h'], [384, 517, 'h'], [392, 515, 'c'], [399, 519, 'c'], [407, 519, 'h'], [414, 518, 'h'], [422, 519, 'c'],
  [436, 520, 'h'], [444, 520, 'c'], [466, 521, 'h'], [489, 521, 'c'], [533, 519, 'y'], [541, 505, 'y'], [548, 499, 'c'],
  [556, 512, 'c'], [563, 512, 'h'], [571, 507, 'h'], [578, 515, 'c'], [586, 518, 'c'], [593, 518, 'h'], [601, 519, 'h'],
  [608, 518, 'h'], [615, 519, 'h'], [623, 518, 'h'], [630, 517, 'h'], [638, 518, 'c'], [645, 519, 'c'], [653, 520, 'c'],
  [660, 521, 'c'], [668, 521, 'c'], [705, 521, 'h'], [765, 518, 'y'], [772, 505, 'y'], [779, 500, 'c'], [787, 509, 'h'],
  [794, 513, 'c'], [802, 512, 'h'], [809, 507, 'h'], [817, 508, 'h'], [824, 515, 'c'], [832, 518, 'h'], [839, 515, 'c'],
  [847, 521, 'h'], [854, 521, 'c'], [861, 521, 'h'], [869, 520, 'h'], [876, 520, 'c'], [899, 521, 'h'], [914, 521, 'c'],
  [937, 520, 'h'], [951, 513, 'y'], [958, 520, 'c'], [966, 519, 'h'], [974, 513, 'y'], [981, 507, 'h'], [989, 513, 'h'],
  [996, 512, 'h'], [1003, 506, 'h'], [1011, 463, 'y'], [1018, 474, 'h'], [1025, 454, 'h']];

put('volume', [
  grid(468), grid(497),
  rect(0, 524, 1028, 2, '#32c832'),
  ...volumes.map(([x, top, k]) => candle([x, top, 525, top, 525, k])),
  curve('0,523 540,522 620,520 770,520 880,519 960,518 1025,517', YELLOW),
  curve('0,523.500 350,522.500 400,521 500,521 560,519 640,518.500 780,519 900,521 960,519 1025,514', LIME),
  curve('0,523.500 325,523 345,519 360,514 385,511 410,511.500 430,516 460,521 520,522 550,517 580,513 610,514 650,518 700,522 760,523 785,516 810,513 840,510 860,514 890,519 940,521 980,518 1000,514 1012,504 1025,499', '#fff'),
  curve('0,522.500 80,522 320,522 345,520 380,516 480,516 510,520 540,521 600,517 640,516 690,516 720,519 770,522 800,520 850,517 900,516 940,518 990,519 1008,516 1025,511', MAGENTA, 2),
  curve('335,519 345,515 360,506 375,507 390,512 400,518 440,521 530,522 550,515 565,509 580,509 600,516 650,520 700,522 765,522 785,514 805,508 820,509 850,518 900,521 970,521 990,514 1005,508 1015,496 1025,482', '#ffa500', 1, '4 4'),
  ...[[357, 495, '12'], [364, 511, '7'], [334, 520, '6'], [341, 519, '5'], [350, 524, '3'], [543, 512, '7'], [550, 506, '9'], [566, 517, '5'], [573, 516, '6'], [537, 526, '4'], [626, 525, '3'], [774, 513, '7'], [781, 507, '9'], [790, 517, '6'], [796, 523, '4'], [811, 515, '6'], [819, 516, '5'], [827, 524, '3'], [954, 520, '4'], [976, 521, '4'], [983, 515, '6'], [1000, 520, '4'], [1006, 515, '7'], [1013, 465, '21'], [1027, 453, '24'], [1027, 475, '8']].map(([x, y, s]) => text(x, y, s, MAGENTA, 'small')),
  axis(421, 527, [[439, '30000'], [468, '20000'], [497, '10000']]),
  `<path d="M1052.500 512.500h33v14h-33z" fill="none" stroke="${RULE}"/>`, text(1055, 524, 'X100', RED)
]);

const PINK = '#ff0080';
const blocks = [
  [PINK, 547, 11, '337-351 352-373 374-388 404-411 538-552 553-560 568-582 583-590 769-783 784-798 814-828 829-843 844-858 970-977 978-992 993-1007 1008-1029'],
  [LIME, 557, 10, '210-217 225-232 322-336 337-344 352-359 538-545 560-567 568-575 769-776 784-791 799-813 814-821 963-977 978-992 993-1007 1015-1029'],
  [YELLOW, 567, 10, '329-336 337-344 352-359 978-985 993-1007 1015-1029'],
  [YELLOW, 561, 16, '344-351 1008-1015'],
  [MAGENTA, 577, 14, '217-224 225-239 322-336 337-351 352-373 538-552 553-567 568-575 769-783 784-798 799-813 814-821 978-992 993-1007 1008-1029'],
  [YELLOW, 583, 8, '329-336 337-344 352-359 1008-1015 1022-1029']
];
put('angle', [
  grid(569),
  ...blocks.flatMap(([color, y, h, spans]) => spans.split(' ').map(s => {
    const [a, b] = s.split('-').map(Number);
    return rect(a, y, b - a, h, color);
  })),
  axis(528, 591, [[547, '3.00'], [569, '1.50']]),
  `<path d="M1053 529h49v61h-49z" fill="none" stroke="${RULE}" stroke-width="2"/>`
]);

const stems = (color, list) => list.map(([x, a, b]) => vline(x, a, b, color)).join('');
put('macd', [
  text(0, 652, '到未来数据', '#606060'),
  hline(0, 1052, 647, BLUE),
  stems(RED, [[153, 645, 647], [160, 646, 647], [198, 645, 647], [347, 636, 647], [355, 633, 647], [366, 637, 647], [541, 641, 647], [548, 640, 647], [563, 643, 647], [571, 641, 647], [720, 646, 647], [757, 644, 647], [772, 638, 647], [779, 638, 647], [787, 638, 647], [802, 640, 647], [817, 640, 647], [981, 643, 647], [989, 641, 647], [996, 637, 647], [1003, 629, 647], [1011, 624, 647], [1018, 616, 647], [1025, 611, 647]]),
  stems(YELLOW, [[183, 645, 647], [190, 645, 647], [362, 639, 647], [369, 641, 647], [377, 643, 647], [384, 645, 647], [556, 643, 647], [794, 640, 647], [809, 640, 647], [824, 642, 647]]),
  stems(CYAN, [[451, 648, 653], [489, 648, 652], [422, 648, 651], [429, 648, 651], [444, 648, 650], [660, 648, 652], [668, 648, 654], [675, 648, 652], [854, 648, 650], [869, 648, 652], [884, 648, 652], [907, 648, 650], [921, 648, 653]]),
  stems(MAGENTA, [[407, 648, 650], [414, 648, 652], [459, 648, 653], [466, 648, 651], [474, 648, 650], [690, 648, 652], [876, 648, 651], [899, 648, 650], [929, 648, 650]]),
  curve('0,646.500 16,646.500', YELLOW), curve('61,648.500 95,648.500', LIME), curve('95,648.500 110,648.500', '#f00'),
  curve('110,648.500 148,648.500', YELLOW), curve('145,648.500 190,647.500 220,646 250,645.500', MAGENTA),
  curve('182,646.500 205,646 232,646', LIME), curve('205,645.500 220,645.500 250,646 290,647 325,646 340,642 352,636 362,635', '#f00'),
  curve('250,645.500 270,646.500 290,647', YELLOW), curve('325,647 345,645 360,641 378,639.500', MAGENTA),
  curve('362,635 375,637 395,640 420,643 440,645 455,647 490,650 510,650', LIME), curve('375,639 400,640 430,642 465,645 500,647 530,647', YELLOW),
  curve('500,650 530,648 550,645 570,642', '#f00'), curve('530,649 560,645 600,645', MAGENTA), curve('570,642 600,645 640,645', LIME),
  curve('600,645.500 640,645 670,646', YELLOW), curve('615,645 645,644', '#f00'), curve('650,646 670,650 690,652 705,650', LIME),
  curve('670,646 690,648 710,648.500', YELLOW), curve('705,649 740,649 768,648 800,644 840,640.500', MAGENTA),
  curve('745,648 768,645 785,640 825,639', '#f00'), curve('825,639 845,640 870,643 900,645', LIME),
  curve('840,640.500 870,642 900,644 930,645.500 975,646.500', YELLOW), curve('900,646 940,648', LIME),
  curve('950,646.500 980,646 1000,643 1012,638 1025,631', MAGENTA), curve('965,646 980,643 990,642 1000,636 1012,628 1025,612', '#f00'),
  ...[285, 300, 308, 323, 964, 971, 979, 994, 1001].map(x => rect(x, 647, 5, 4, YELLOW)),
  rect(360, 643, 5, 4, '#60c0ff'), rect(643, 643, 5, 4, LIME), rect(830, 643, 5, 4, '#60c0ff'),
  buyArrow(177, 648), buyArrow(542, 648), buyArrow(766, 648),
  axis(592, 655, [[611, '1.00']])
]);

put('time', [
  text(0, 668, '016年', RED), rect(61, 656, 77, 15, '#000080'),
  vline(60, 656, 671, RULE), vline(138, 656, 671, RULE),
  text(62, 668, '2016/09/13/二', '#c0c0c0'),
  ...[[152, '10'], [272, '11'], [436, '12'], [600, '1'], [734, '2'], [868, '3']].map(([x, s]) => vline(x, 656, 671, RULE) + text(x + 2, 668, s, RED, 'date')),
  ...[182, 212, 242, 313, 354, 395, 477, 518, 559, 634, 667, 701, 768, 801, 835].map(x => vline(x, 656, 658, RULE)),
  axis(656, 671, [])
]);
```
